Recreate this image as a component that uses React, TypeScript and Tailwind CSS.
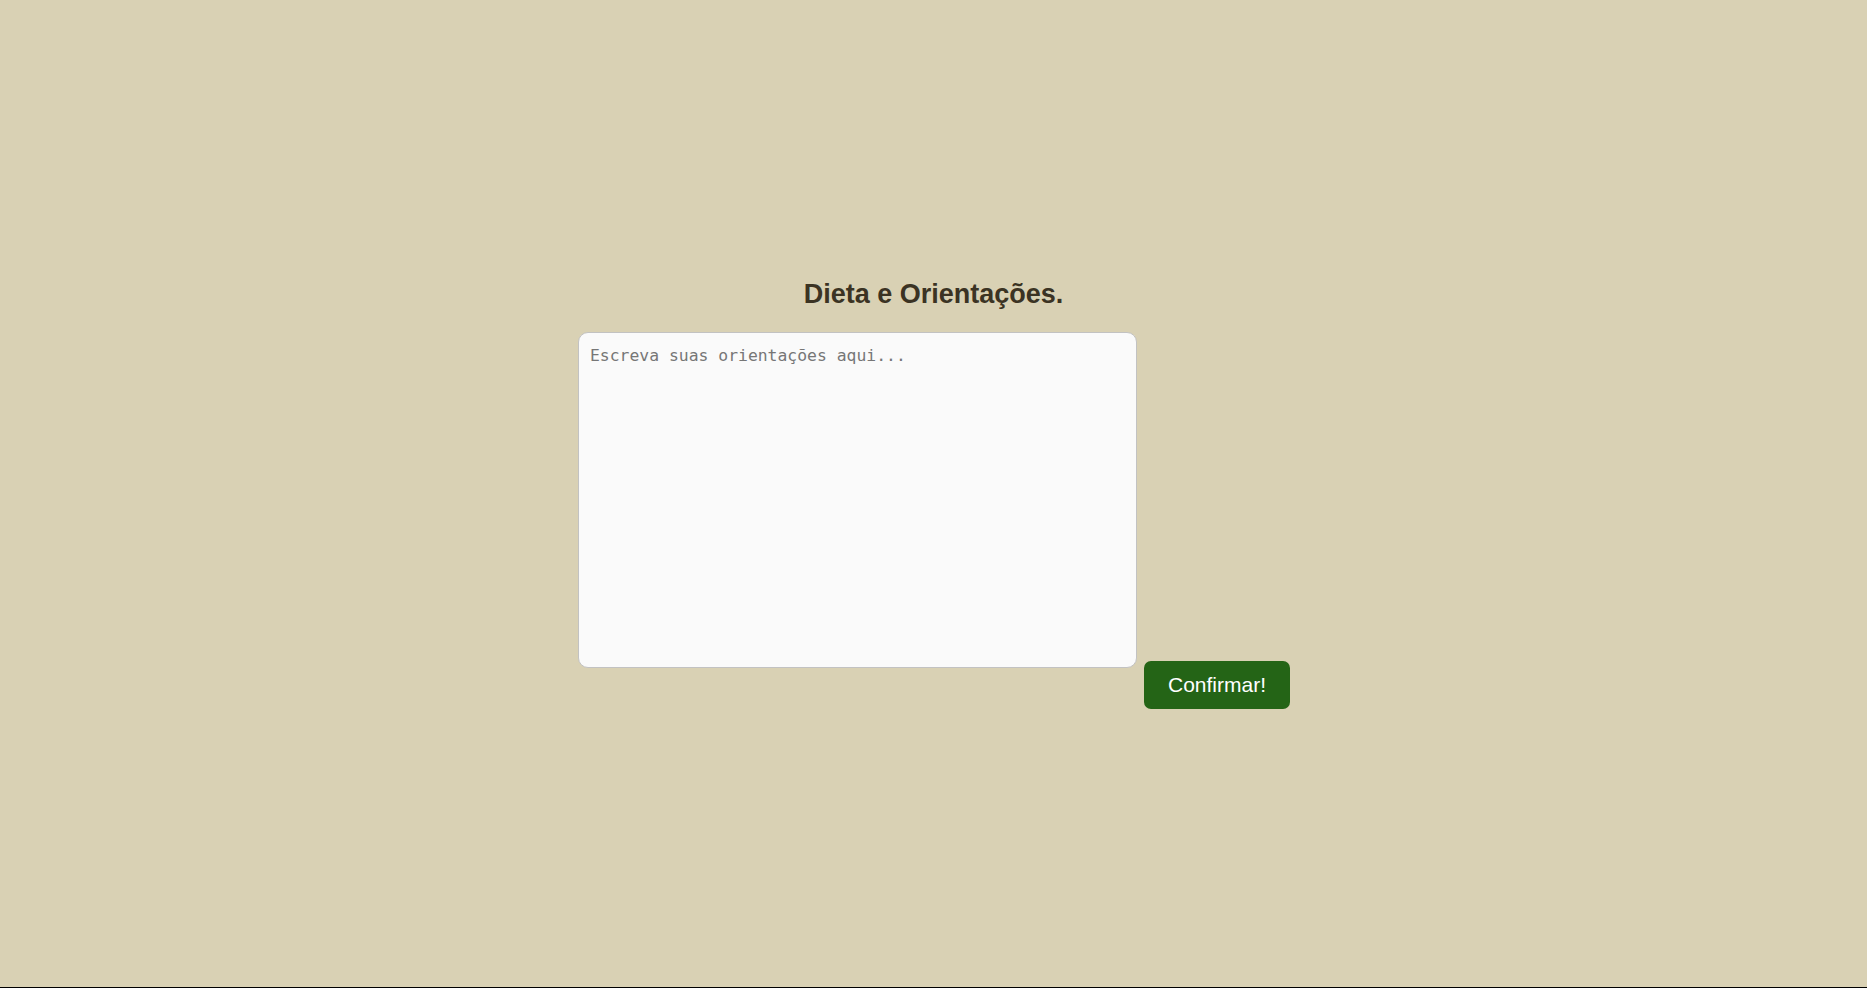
export default function App() {
  return (
    <div className="h-[988px] bg-[#d9d1b4] border-b border-black flex flex-col items-center justify-center font-['Liberation_Sans',Arial,sans-serif]">
      <h2 className="text-[27px] leading-[32px] font-bold text-[#3b3323] mb-[22px] mt-0">
        Dieta e Orientações.
      </h2>
      <div className="flex items-end gap-[7px] pl-[1px]">
        <textarea
          placeholder="Escreva suas orientações aqui..."
          className="w-[559px] h-[336px] mb-[41px] bg-[#fafafa] border border-[#c2c2c2] rounded-[10px] px-[11px] pt-[13px] pb-[9px] resize-none outline-none font-['DejaVu_Sans_Mono',monospace] text-[16.4px] leading-[20px] text-[#333] placeholder:text-[#767676]"
        />
        <button className="w-[146px] h-[48px] bg-[#246416] text-white rounded-[7px] text-[21px]">
          Confirmar!
        </button>
      </div>
    </div>
  );
}
